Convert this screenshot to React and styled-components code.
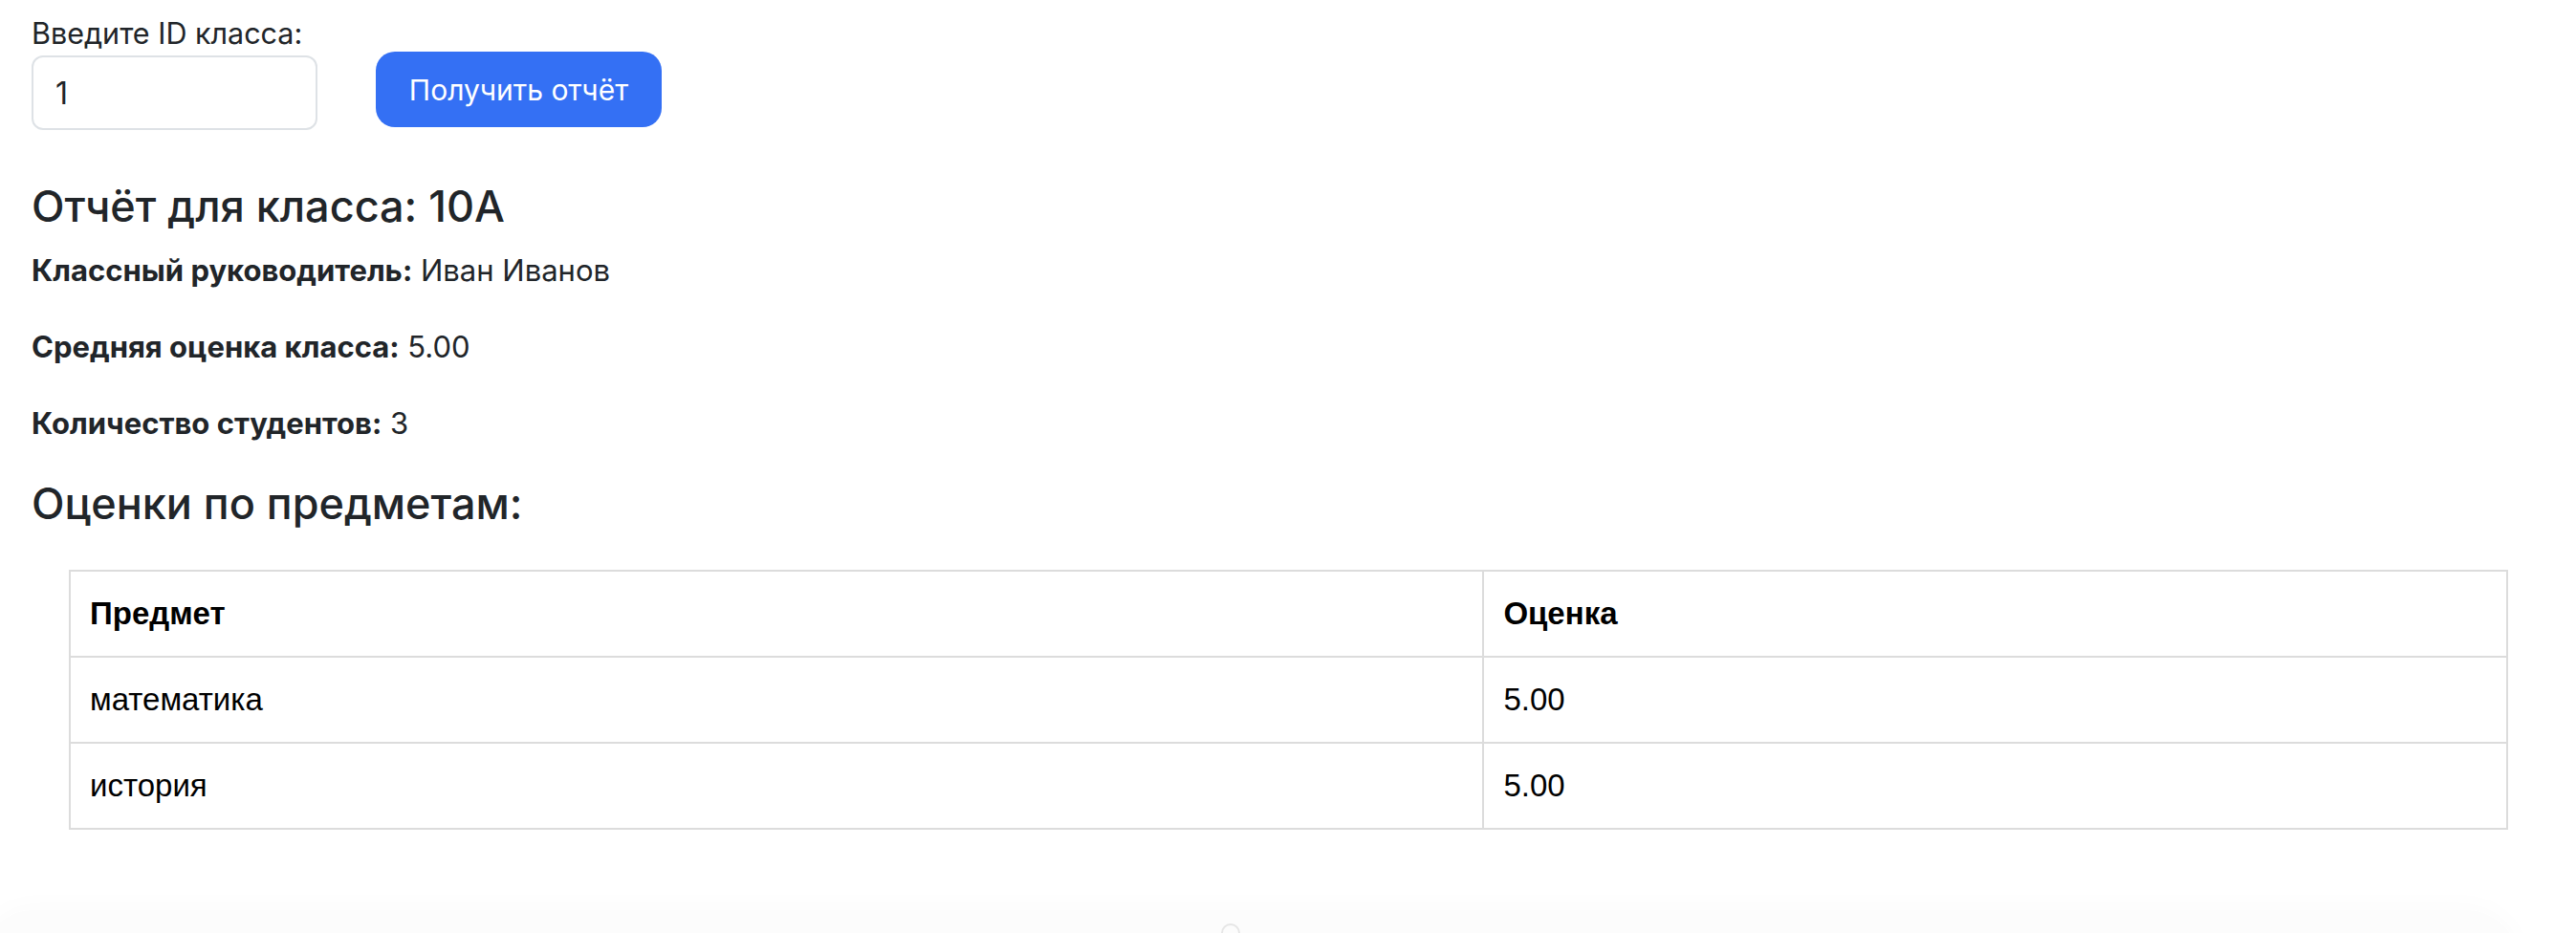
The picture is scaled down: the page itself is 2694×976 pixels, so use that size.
import React, { useState } from "react";
import styled, { createGlobalStyle } from "styled-components";

const GlobalStyle = createGlobalStyle`
  html, body {
    margin: 0;
    padding: 0;
    background: #ffffff;
  }
  body {
    font-family: Inter, "Noto Sans", "Liberation Sans", sans-serif;
    color: #212529;
    overflow: hidden;
  }
  * {
    box-sizing: border-box;
  }
`;

const Page = styled.div`
  min-height: 976px;
  padding: 17px 33px 60px;
`;

const Form = styled.form`
  display: flex;
  flex-direction: column;
  align-items: flex-start;
`;

const Label = styled.label`
  font-size: 30.5px;
  line-height: 36px;
  margin-bottom: 5px;
`;

const Controls = styled.div`
  display: flex;
  align-items: flex-start;
  gap: 61px;
`;

const Input = styled.input`
  width: 299px;
  height: 78px;
  padding: 0 23px;
  border: 2px solid #dee2e6;
  border-radius: 12px;
  font-family: inherit;
  font-size: 32px;
  color: #212529;
  background: #fff;
  outline: none;
`;

const Button = styled.button`
  width: 299px;
  height: 79px;
  margin-top: -4px;
  border: none;
  border-radius: 20px;
  background: #3470f4;
  color: #fff;
  font-family: inherit;
  font-size: 30px;
  cursor: pointer;
`;

const Report = styled.section`
  margin-top: 54px;
`;

const Title = styled.h3`
  margin: 0 0 22px;
  font-size: 45px;
  line-height: 52px;
  font-weight: 500;
`;

const Info = styled.p`
  margin: 0 0 42px;
  font-size: 31px;
  line-height: 38px;
`;

const Strong = styled.strong`
  font-weight: 700;
`;

const SubTitle = styled.h4`
  margin: -3px 0 43px;
  font-size: 45px;
  line-height: 52px;
  font-weight: 500;
`;

const TableWrap = styled.div`
  padding: 0 38px 0 39px;
`;

const Table = styled.table`
  width: 100%;
  border-collapse: collapse;
  font-family: "Liberation Sans", Arial, sans-serif;
  font-size: 33px;
  color: #000;
`;

const Cell = styled.td`
  border: 2px solid #dcdcdc;
  height: 90px;
  padding: 0 20px;
  text-align: left;
  font-weight: ${(p) => (p.$head ? 700 : 400)};
  width: ${(p) => p.$width || "auto"};
`;

/* faint floating bar peeking in from under the bottom edge */
const BottomShade = styled.div`
  position: fixed;
  left: -20px;
  right: 60px;
  bottom: -86px;
  height: 110px;
  border-radius: 60px;
  background: #fcfcfc;
  box-shadow: 0 -4px 30px rgba(0, 0, 0, 0.018);
  display: flex;
  justify-content: center;
`;

const ShadeDot = styled.span`
  margin-top: 14px;
  margin-left: -40px;
  width: 20px;
  height: 20px;
  border-radius: 50%;
  border: 2px solid #e6e6e6;
`;

const grades = [
  { subject: "математика", grade: "5.00" },
  { subject: "история", grade: "5.00" },
];

export default function App() {
  const [classId, setClassId] = useState("1");

  return (
    <Page>
      <GlobalStyle />
      <Form onSubmit={(e) => e.preventDefault()}>
        <Label htmlFor="classId">Введите ID класса:</Label>
        <Controls>
          <Input
            id="classId"
            value={classId}
            onChange={(e) => setClassId(e.target.value)}
          />
          <Button type="submit">Получить отчёт</Button>
        </Controls>
      </Form>

      <Report>
        <Title>Отчёт для класса: 10A</Title>
        <Info>
          <Strong>Классный руководитель:</Strong> Иван Иванов
        </Info>
        <Info>
          <Strong>Средняя оценка класса:</Strong> 5.00
        </Info>
        <Info>
          <Strong>Количество студентов:</Strong> 3
        </Info>
        <SubTitle>Оценки по предметам:</SubTitle>
        <TableWrap>
          <Table>
            <thead>
              <tr>
                <Cell as="th" $head $width="58%">Предмет</Cell>
                <Cell as="th" $head>Оценка</Cell>
              </tr>
            </thead>
            <tbody>
              {grades.map((g) => (
                <tr key={g.subject}>
                  <Cell>{g.subject}</Cell>
                  <Cell>{g.grade}</Cell>
                </tr>
              ))}
            </tbody>
          </Table>
        </TableWrap>
      </Report>

      <BottomShade>
        <ShadeDot />
      </BottomShade>
    </Page>
  );
}
